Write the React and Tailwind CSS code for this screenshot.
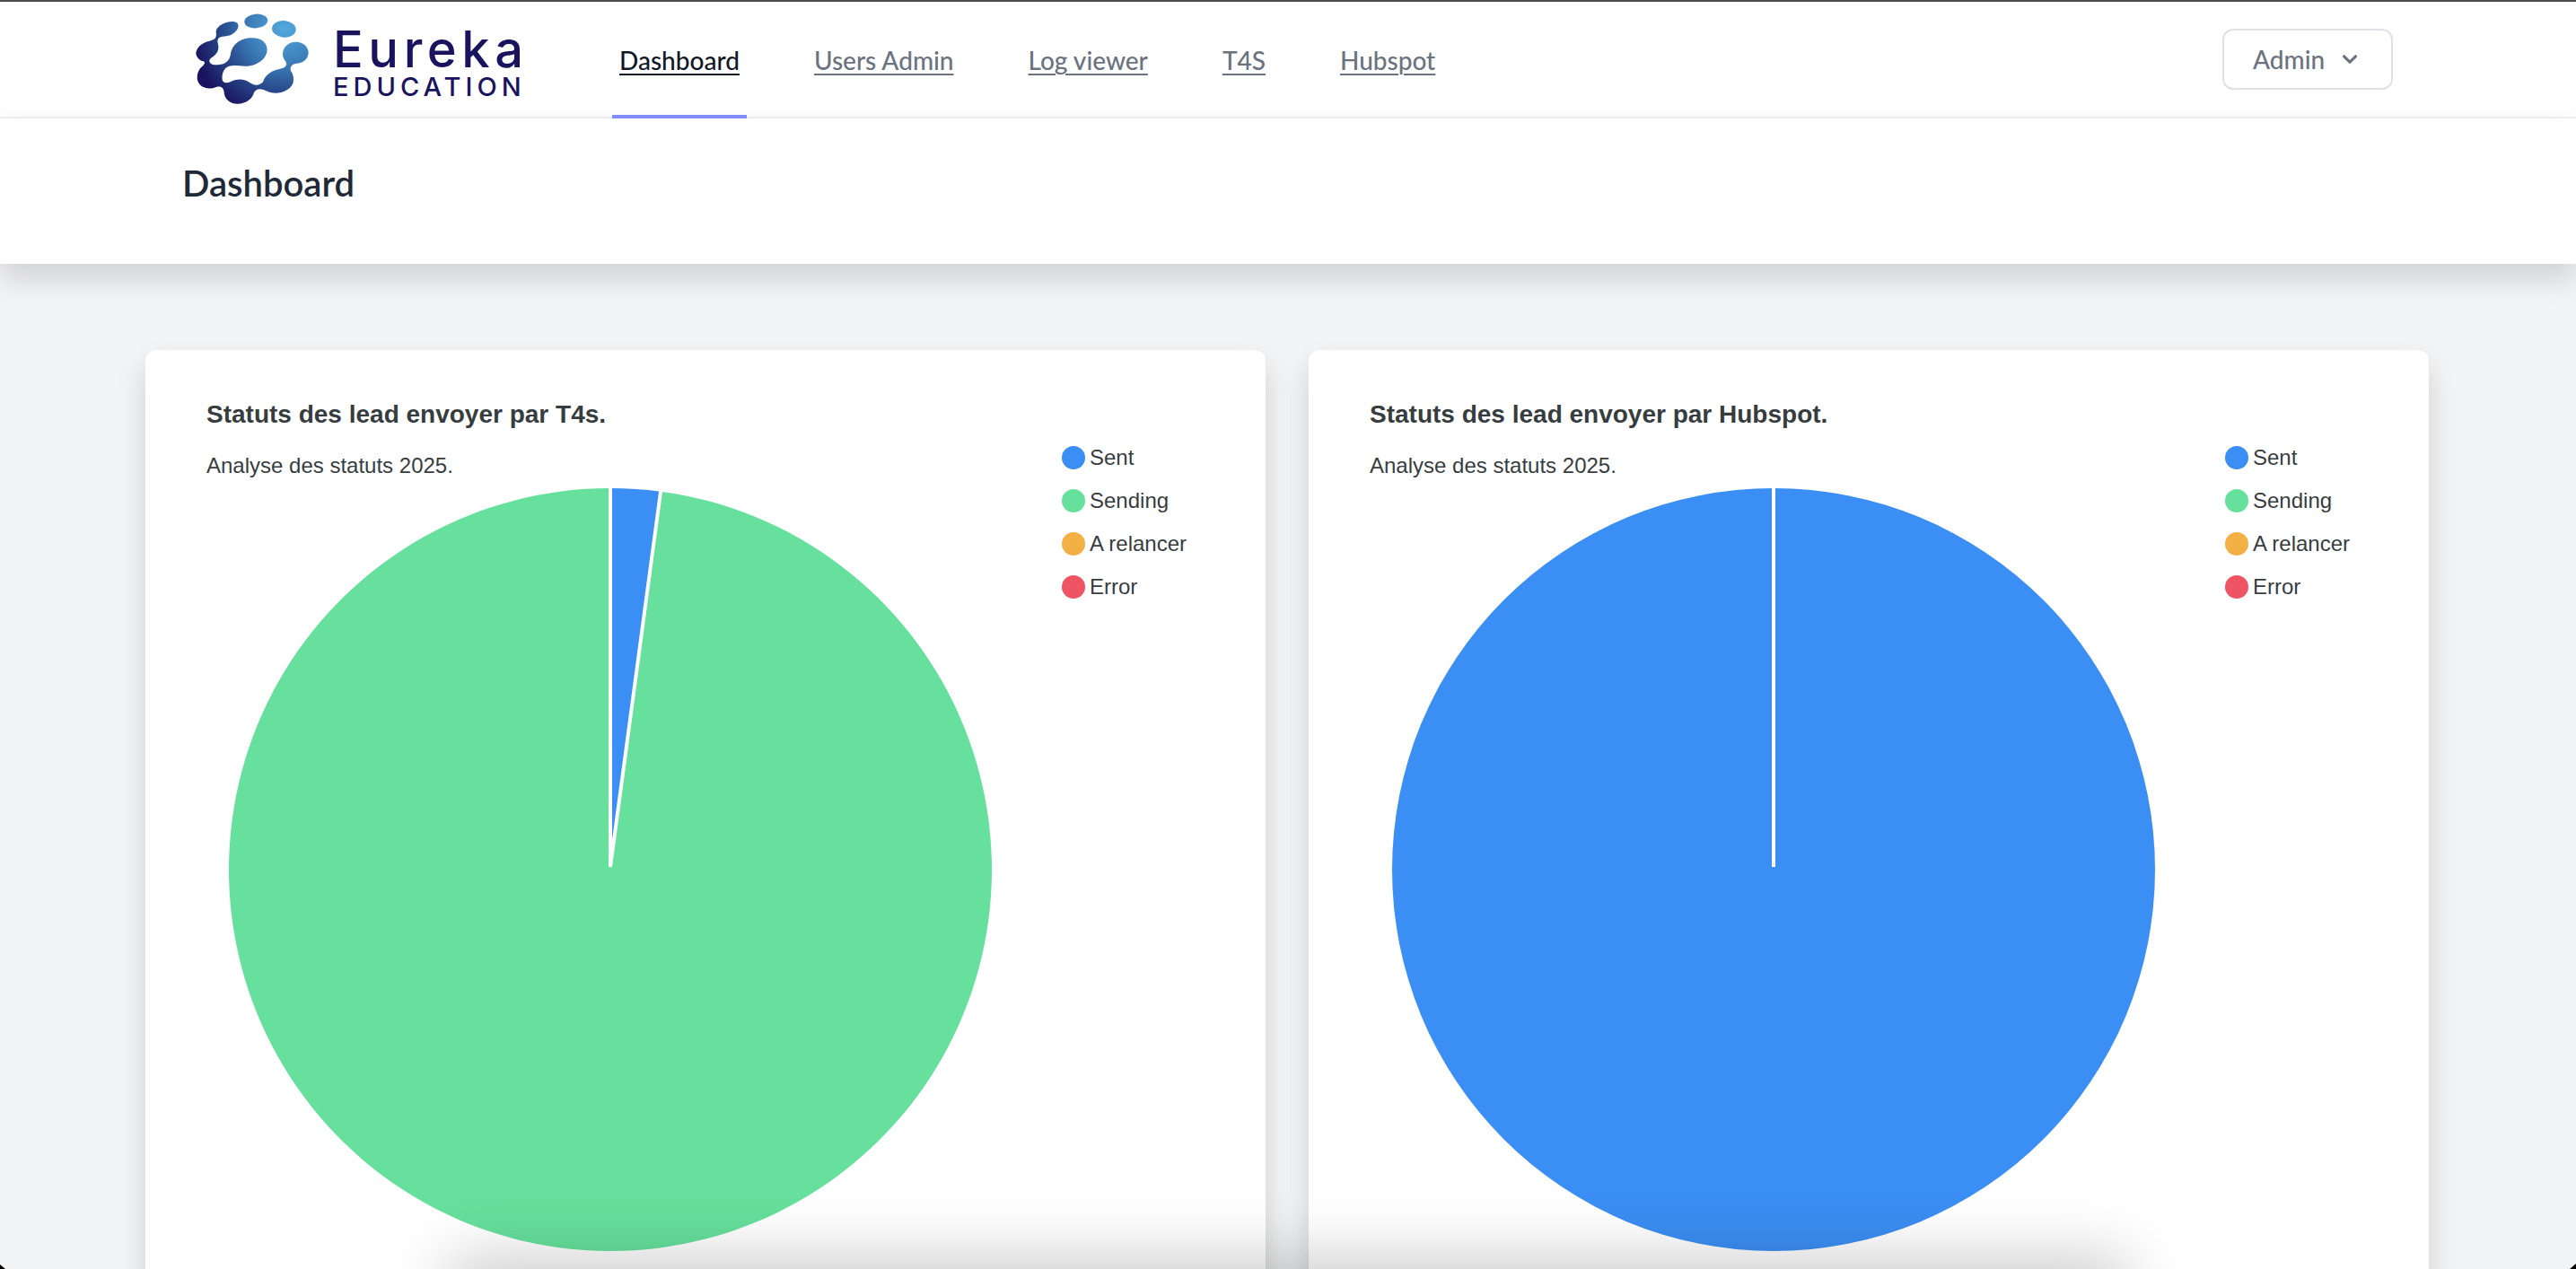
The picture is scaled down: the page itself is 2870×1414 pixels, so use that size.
const NAV_LINKS = ['Dashboard', 'Users Admin', 'Log viewer', 'T4S', 'Hubspot'];

const COLORS = { sent: '#3b8ef3', sending: '#66e09c', relancer: '#f3b145', error: '#ed5564' };

const LEGEND = [
  { label: 'Sent', dot: 'bg-[#3b8ef3]' },
  { label: 'Sending', dot: 'bg-[#66e09c]' },
  { label: 'A relancer', dot: 'bg-[#f3b145]' },
  { label: 'Error', dot: 'bg-[#ed5564]' },
];

const CHARTS = [
  {
    title: 'Statuts des lead envoyer par T4s.',
    slices: [
      { color: COLORS.sent, share: 0.0211 },
      { color: COLORS.sending, share: 0.9789 },
    ],
  },
  {
    title: 'Statuts des lead envoyer par Hubspot.',
    slices: [{ color: COLORS.sent, share: 1 }],
  },
];

function BrandMark() {
  return (
    <svg viewBox="50 40 384 312" className="h-[104px] w-32 shrink-0" aria-hidden="true">
      <defs>
        <radialGradient id="brand" gradientUnits="userSpaceOnUse" cx="350" cy="95" r="310">
          <stop offset="0" stopColor="#52a9dd" />
          <stop offset="0.4" stopColor="#3b7bb7" />
          <stop offset="0.68" stopColor="#28498b" />
          <stop offset="1" stopColor="#1a145f" />
        </radialGradient>
      </defs>
      <g fill="url(#brand)">
        <ellipse cx="255" cy="71.5" rx="39" ry="23.5" transform="rotate(-5 255 71.5)" />
        <ellipse cx="348" cy="98" rx="40" ry="28" transform="rotate(5 348 98)" />
        <path d="M121 107C121 90 150 72 178 73C197 74 200 90 190 102C178 118 160 123 143 123C130 124 124 132 127 145C133 165 126 180 112 190C98 198 96 205 102 212C108 220 125 219 145 215C165 205 167 195 170 182C173 160 190 132 235 128C275 126 292 145 292 168C290 200 255 222 220 222C195 222 180 218 165 222C145 228 140 250 142 268C145 280 160 280 172 273C195 262 220 266 235 278C250 290 268 286 278 275C285 250 310 235 335 231C350 229 358 222 356 210C350 200 344 195 344 180C346 155 365 141 388 141C412 141 430 157 430 178C428 200 410 213 390 213C375 215 367 225 371 238C380 250 382 265 378 280C370 300 345 312 320 312C300 311 290 304 278 300C262 296 255 300 248 310C244 330 222 348 193 348C165 347 148 330 148 308C146 294 138 289 124 291C112 296 100 297 90 296C70 292 58 278 58 260C58 245 64 232 74 224C82 216 86 210 80 206C65 204 54 190 54 178C57 155 80 141 100 138C118 134 124 128 121 107Z" />
      </g>
    </svg>
  );
}

function Brand() {
  return (
    <a href="#" className="flex items-start font-['Inter',sans-serif] text-[#1a145f]">
      <BrandMark />
      <span className="ml-[26px] flex flex-col pt-[14px] font-medium">
        <span className="text-[56px] leading-14 tracking-widest">Eureka</span>
        <span className="text-[29px] leading-7 tracking-[5px]">EDUCATION</span>
      </span>
    </a>
  );
}

function NavBar() {
  return (
    <nav className="border-t-2 border-b-2 border-t-[#4f4d4d] border-b-[#f0f1f2] bg-white">
      <div className="mx-auto flex h-32 max-w-[2560px] justify-between pr-[49px] pl-12">
        <div className="flex">
          <div className="ml-[14px] w-[465px] pt-[11px]">
            <Brand />
          </div>
          <ul className="flex gap-[67px]">
            {NAV_LINKS.map((label, i) => (
              <li key={label} className="flex">
                <a
                  href="#"
                  aria-current={i === 0 ? 'page' : undefined}
                  className={
                    'z-20 -mb-[2px] flex items-center border-b-4 px-2 pt-1 text-[28px] font-medium underline decoration-2 underline-offset-4 ' +
                    (i === 0 ? 'border-[#818cf8] text-[#111827]' : 'border-transparent text-[#6b7280]')
                  }
                >
                  {label}
                </a>
              </li>
            ))}
          </ul>
        </div>
        <button
          type="button"
          className="mt-[30px] flex h-[68px] w-[190px] items-center rounded-xl border-2 border-[#dee2e6] pl-8 text-[28px] font-medium text-[#6b7280]"
        >
          Admin
          <svg viewBox="0 0 20 20" className="ml-3 size-8 fill-current" aria-hidden="true">
            <path d="M5.293 7.293a1 1 0 011.414 0L10 10.586l3.293-3.293a1 1 0 111.414 1.414l-4 4a1 1 0 01-1.414 0l-4-4a1 1 0 010-1.414z" />
          </svg>
        </button>
      </div>
    </nav>
  );
}

const SIZE = 852;
const C = SIZE / 2;
const R = C - 1;

function pointAt(share) {
  const a = share * 2 * Math.PI;
  return [C + R * Math.sin(a), C - R * Math.cos(a)];
}

function PieChart({ slices, label }) {
  let start = 0;
  const arcs = slices.map((s) => {
    const from = start;
    start += s.share;
    return { ...s, from, to: start };
  });
  return (
    <svg viewBox={`0 0 ${SIZE} ${SIZE}`} className="block w-full" role="img" aria-label={label}>
      {arcs.map(({ color, share, from, to }) => {
        if (share === 1) return <circle key={color} cx={C} cy={C} r={R} fill={color} />;
        const [x1, y1] = pointAt(from);
        const [x2, y2] = pointAt(to);
        return (
          <path
            key={color}
            fill={color}
            d={`M${C} ${C}L${x1} ${y1}A${R} ${R} 0 ${share > 0.5 ? 1 : 0} 1 ${x2} ${y2}Z`}
          />
        );
      })}
      {/* White separators, stopping just short of the centre */}
      {arcs.map(({ color, from }) => {
        const [x, y] = pointAt(from);
        return <line key={color} x1={C} y1={C - 3} x2={x} y2={y - 1} stroke="#fff" strokeWidth="4" />;
      })}
    </svg>
  );
}

function ChartCard({ title, slices }) {
  return (
    <section className="flex items-start rounded-xl bg-white pt-[52px] pb-20 font-['Liberation_Sans',sans-serif] text-[#373d3f] shadow-[0_16px_32px_rgba(0,0,0,0.15)]">
      <div className="min-w-0 flex-1 pl-[68px]">
        <h3 className="text-[28px] leading-10 font-bold">{title}</h3>
        <p className="mt-[21px] text-2xl leading-8">Analyse des statuts 2025.</p>
        <div className="mt-2 pr-[77px] pl-6">
          <PieChart slices={slices} label={title} />
        </div>
      </div>
      <ul className="w-[227px] shrink-0 pt-11">
        {LEGEND.map(({ label, dot }) => (
          <li key={label} className="flex h-12 items-center gap-[5px] text-2xl">
            <span className={'size-[26px] rounded-full ' + dot} />
            {label}
          </li>
        ))}
      </ul>
    </section>
  );
}

export default function App() {
  return (
    <div className="relative h-screen overflow-hidden bg-[#f3f4f6] font-['Lato',sans-serif]">
      <NavBar />
      <header className="relative z-10 bg-white shadow-[0_16px_32px_rgba(0,0,0,0.15)]">
        <div className="mx-auto max-w-[2560px] px-12 pt-12 pb-[66px]">
          <h1 className="text-[40px] leading-12 font-semibold text-[#1f2937]">Dashboard</h1>
        </div>
      </header>
      <main className="mx-auto grid max-w-[2546px] grid-cols-2 gap-12 pt-24 pr-[2px]">
        {CHARTS.map((chart) => (
          <ChartCard key={chart.title} {...chart} />
        ))}
      </main>
      {/* Soft shadow rising from the bottom edge of the window */}
      <div className="pointer-events-none absolute inset-x-[500px] top-full z-30 h-40 shadow-[0_-14px_70px_rgba(0,0,0,0.2)]" />
      <svg viewBox="0 0 6 5" className="absolute bottom-0 left-0 z-30 h-[5px] w-[6px]" aria-hidden="true">
        <path d="M0 0L6 5H0Z" />
      </svg>
      <svg viewBox="0 0 7 6" className="absolute right-0 bottom-0 z-30 h-[6px] w-[7px]" aria-hidden="true">
        <path d="M7 0L0 6H7Z" />
      </svg>
    </div>
  );
}
